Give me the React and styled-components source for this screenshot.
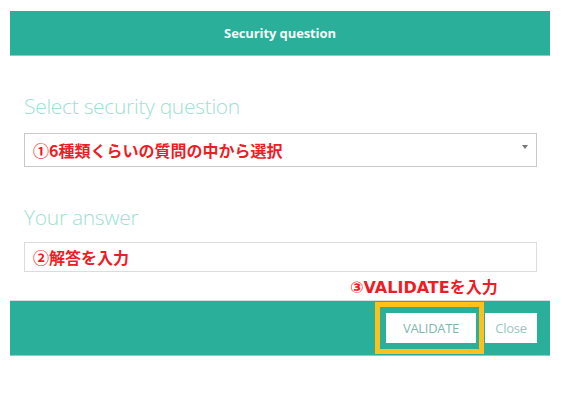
import React from 'react';
import styled, { createGlobalStyle } from 'styled-components';

const GlobalStyle = createGlobalStyle`
  body {
    margin: 0;
    background: #ffffff;
    font-family: "Open Sans", "Noto Sans CJK JP", sans-serif;
  }
`;

const Page = styled.div`
  padding: 11px 12px 0 10px;
  width: 562px;
  height: 400px;
  box-sizing: border-box;
`;

const Modal = styled.div`
  width: 540px;
  display: flex;
  flex-direction: column;
`;

const Header = styled.div`
  height: 45px;
  background: #2aaf9a;
  border-bottom: 1px solid #7fd3c4;
  box-sizing: border-box;
  display: flex;
  align-items: center;
  justify-content: center;
  color: #f4fbf9;
  font-size: 13px;
  font-weight: 700;
  letter-spacing: -0.1px;
`;

const Body = styled.div`
  padding: 0 13px 0 14px;
  display: flex;
  flex-direction: column;
`;

const Label = styled.div`
  font-weight: 300;
  font-size: 21px;
  line-height: 26px;
  color: #9fe0d2;
  letter-spacing: -0.3px;
  margin-top: ${(p) => p.top}px;
  margin-bottom: ${(p) => p.bottom}px;
`;

const Field = styled.div`
  position: relative;
  height: ${(p) => p.h}px;
  border: 1px solid ${(p) => p.line};
  box-sizing: border-box;
  display: flex;
  align-items: center;
  padding-left: 8px;
`;

const Note = styled.span`
  color: #ee1c25;
  font-family: ${(p) => (p.wide ? '"DejaVu Sans", ' : '')}"Noto Sans CJK JP", sans-serif;
  font-weight: 700;
  font-size: 16px;
  line-height: 20px;
`;

const Arrow = styled.span`
  position: absolute;
  right: 8px;
  top: 11px;
  width: 0;
  height: 0;
  border-left: 3px solid transparent;
  border-right: 3px solid transparent;
  border-top: 4px solid #777777;
`;

const NoteRow = styled.div`
  height: 28px;
  display: flex;
  align-items: center;
  padding-left: 340px;
  padding-top: 4px;
  box-sizing: border-box;
`;

const Footer = styled.div`
  height: 56px;
  background: #2aaf9a;
  border-top: 1px solid #d9dedd;
  border-bottom: 1px solid #7fd3c4;
  box-sizing: border-box;
  display: flex;
  align-items: center;
  justify-content: flex-end;
  gap: 9px;
  padding-right: 13px;
`;

const Highlight = styled.div`
  position: relative;
  display: flex;
  &::after {
    content: '';
    position: absolute;
    top: -11px;
    left: -11px;
    right: -8px;
    bottom: -11px;
    border: 5px solid #fcc21b;
    pointer-events: none;
  }
`;

const Button = styled.button`
  height: 30px;
  width: ${(p) => p.w}px;
  background: #ffffff;
  border: none;
  padding: 0;
  color: ${(p) => p.tone};
  font-family: "Open Sans", sans-serif;
  font-size: 13px;
  letter-spacing: -0.3px;
  cursor: pointer;
`;

const App = () => {
  return (
    <>
      <GlobalStyle />
      <Page>
        <Modal>
          <Header>Security question</Header>
          <Body>
            <Label top={37} bottom={14}>Select security question</Label>
            <Field h={34} line="#c9c9c9">
              <Note>①6種類くらいの質問の中から選択</Note>
              <Arrow />
            </Field>
            <Label top={37} bottom={12}>Your answer</Label>
            <Field h={30} line="#dcdcdc">
              <Note>②解答を入力</Note>
            </Field>
          </Body>
          <NoteRow>
            <Note wide>③VALIDATEを入力</Note>
          </NoteRow>
          <Footer>
            <Highlight>
              <Button w={90} tone="#7fb7af">VALIDATE</Button>
            </Highlight>
            <Button w={52} tone="#93c9c1">Close</Button>
          </Footer>
        </Modal>
      </Page>
    </>
  );
};

export default App;
